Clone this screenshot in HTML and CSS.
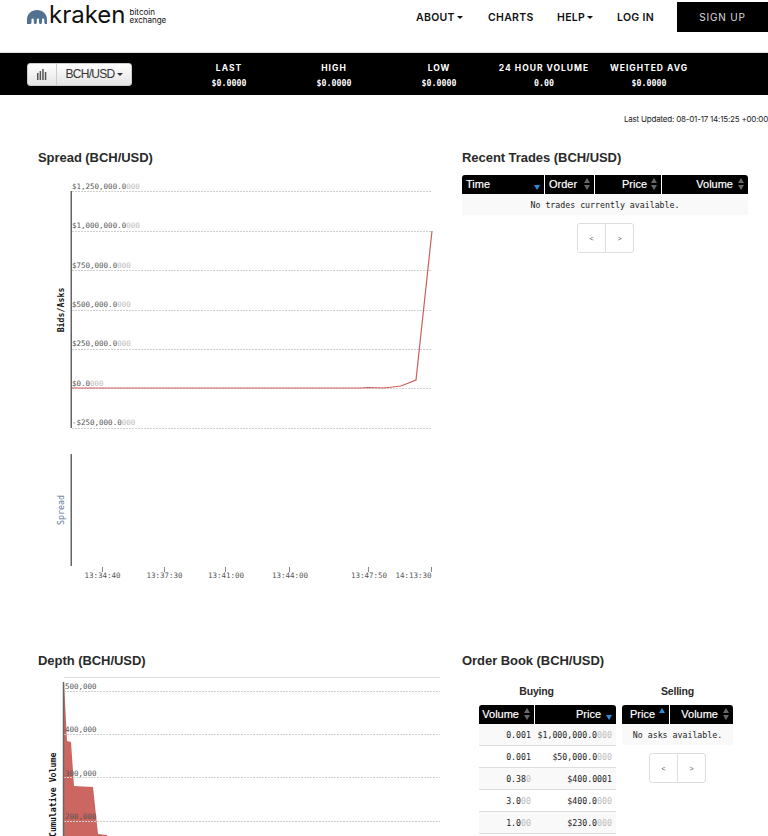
FILE: index.html
```html
<!DOCTYPE html>
<html lang="en">
<head>
<meta charset="utf-8">
<title>Kraken Bitcoin Exchange</title>
<link rel="stylesheet" href="styles.css">
</head>
<body>
<header class="topbar">
  <a class="logo">
    <svg class="logo-mark" viewBox="0 0 20 14" width="20" height="14" aria-hidden="true">
      <path fill="#52708f" d="M0 14V9.500C0 4 4.400 0 10 0s10 4 10 9.500V14h-1.200c-1 0-1.500-.8-1.500-1.800V9.600c0-.7-.5-1.200-1.100-1.200s-1.200.5-1.200 1.200v2.600c0 1-.7 1.800-1.500 1.800s-1.500-.8-1.500-1.800V9.600c0-.7-.5-1.200-1.100-1.200s-1.100.5-1.100 1.200v2.600c0 1-.7 1.800-1.500 1.800s-1.500-.8-1.500-1.800V9.600c0-.7-.5-1.200-1.200-1.200s-1.100.5-1.100 1.200v2.600c0 1-.5 1.800-1.500 1.800z"/>
    </svg>
    <span class="logo-word">kraken</span>
    <span class="logo-sub"><span>bitcoin</span><span>exchange</span></span>
  </a>
  <nav class="mainnav">
    <a class="nav-about">ABOUT<i class="caret"></i></a>
    <a class="nav-charts">CHARTS</a>
    <a class="nav-help">HELP<i class="caret"></i></a>
    <a class="nav-login">LOG IN</a>
  </nav>
  <a class="signup">SIGN UP</a>
</header>

<section class="ticker">
  <div class="pair-btn">
    <span class="pair-icon">
      <svg viewBox="0 0 10 12" width="10" height="12" aria-hidden="true"><path fill="#555" d="M0 5h1.500v7H0zM2.600 3h1.500v9H2.600zM5.200 1h1.500v11H5.200zM7.800 4h1.500v8H7.800z"/></svg>
    </span>
    <span class="pair-name">BCH/USD<i class="caret"></i></span>
  </div>
  <div class="stats">
    <div class="stat"><b>LAST</b><span>$0.0000</span></div>
    <div class="stat"><b>HIGH</b><span>$0.0000</span></div>
    <div class="stat"><b>LOW</b><span>$0.0000</span></div>
    <div class="stat"><b>24 HOUR VOLUME</b><span>0.00</span></div>
    <div class="stat"><b>WEIGHTED AVG</b><span>$0.0000</span></div>
  </div>
</section>

<p class="updated">Last Updated: 08-01-17 14:15:25 +00:00</p>

<main class="panels">
  <section class="panel panel-chart">
    <h2>Spread (BCH/USD)</h2>
    <svg class="chart chart-spread" viewBox="0 175 462 420" width="462" height="420">
      <g class="grid">
        <path d="M72 191.500H432M72 231.500H432M72 270.500H432M72 310.500H432M72 349.500H432M72 388.500H432M72 428.500H432"/>
      </g>
      <path class="axis" d="M71.250 191V428M71.250 454V566"/>
      <g class="ticks"><path d="M102.500 567v5M164.500 567v5M225.500 567v5M289.500 567v5M368.500 567v5M431.500 567v5"/></g>
      <polyline class="line" points="72,388 360,388 368,387.500 384,388 401,386 416,380 432,231"/>
      <g class="ylabel">
        <text x="72" y="189">$1,250,000.0<tspan>000</tspan></text>
        <text x="72" y="228">$1,000,000.0<tspan>000</tspan></text>
        <text x="72" y="268">$750,000.0<tspan>000</tspan></text>
        <text x="72" y="307">$500,000.0<tspan>000</tspan></text>
        <text x="72" y="346">$250,000.0<tspan>000</tspan></text>
        <text x="72" y="386">$0.0<tspan>000</tspan></text>
        <text x="72" y="425">-$250,000.0<tspan>000</tspan></text>
      </g>
      <g class="xlabel">
        <text x="102.500" y="578">13:34:40</text>
        <text x="164.500" y="578">13:37:30</text>
        <text x="226" y="578">13:41:00</text>
        <text x="290" y="578">13:44:00</text>
        <text x="369" y="578">13:47:50</text>
        <text x="413.500" y="578">14:13:30</text>
      </g>
      <text class="title-bids" transform="translate(64 310) rotate(-90)">Bids/Asks</text>
      <text class="title-spread" transform="translate(64 510) rotate(-90)">Spread</text>
    </svg>
  </section>

  <section class="panel panel-table">
    <h2>Recent Trades (BCH/USD)</h2>
    <table class="data trades">
      <thead>
        <tr>
          <th class="tl c-time">Time<i class="sort sort-down"></i></th>
          <th class="tl c-order">Order<i class="sort"></i></th>
          <th class="c-price">Price<i class="sort"></i></th>
          <th class="c-volume">Volume<i class="sort"></i></th>
        </tr>
      </thead>
      <tbody><tr><td colspan="4" class="empty">No trades currently available.</td></tr></tbody>
    </table>
    <div class="pager"><span>&lt;</span><span>&gt;</span></div>
  </section>

  <section class="panel panel-chart panel-depth">
    <h2>Depth (BCH/USD)</h2>
    <svg class="chart chart-depth" viewBox="0 672 462 170" width="462" height="170">
      <path class="topline" d="M64 677.500H440"/>
      <polygon class="area" points="64,682 67,741 71,742 74,786 93,787 98,834 107,835 109,842 64,842"/>
      <g class="grid"><path d="M64 691.500H440M64 734.500H440M64 777.500H440M64 821.500H440"/></g>
      <path class="axis" d="M63.500 682V842"/>
      <g class="ylabel">
        <text x="65" y="689">500,000</text>
        <text x="65" y="732">400,000</text>
        <text x="65" y="776">300,000</text>
        <text x="65" y="819">200,000</text>
      </g>
      <text class="title-bids" transform="translate(56 837) rotate(-90)">Cumulative Volume</text>
    </svg>
  </section>

  <section class="panel panel-table">
    <h2>Order Book (BCH/USD)</h2>
    <div class="book">
      <div class="book-side buying">
        <h3>Buying</h3>
        <table class="data">
          <thead>
            <tr>
              <th class="b-vol">Volume<i class="sort"></i></th>
              <th class="b-price">Price<i class="sort sort-down"></i></th>
            </tr>
          </thead>
          <tbody>
            <tr><td>0.001</td><td>$1,000,000.0<s>000</s></td></tr>
            <tr><td>0.001</td><td>$50,000.0<s>000</s></td></tr>
            <tr><td>0.38<s>0</s></td><td>$400.0001</td></tr>
            <tr><td>3.0<s>00</s></td><td>$400.0<s>000</s></td></tr>
            <tr><td>1.0<s>00</s></td><td>$230.0<s>000</s></td></tr>
          </tbody>
        </table>
      </div>
      <div class="book-side selling">
        <h3>Selling</h3>
        <table class="data">
          <thead>
            <tr>
              <th class="s-price">Price<i class="sort sort-up"></i></th>
              <th class="s-vol">Volume<i class="sort"></i></th>
            </tr>
          </thead>
          <tbody><tr><td colspan="2" class="empty">No asks available.</td></tr></tbody>
        </table>
        <div class="pager"><span>&lt;</span><span>&gt;</span></div>
      </div>
    </div>
  </section>
</main>
</body>
</html>
```
FILE: styles.css
```css
* { box-sizing: border-box; }
html, body { margin: 0; padding: 0; }
body {
  width: 768px;
  height: 836px;
  overflow: hidden;
  background: #fff;
  color: #222;
  font-family: "Liberation Sans", sans-serif;
}

.caret {
  display: inline-block;
  width: 0;
  height: 0;
  margin-left: 2px;
  vertical-align: middle;
  border-left: 3px solid transparent;
  border-right: 3px solid transparent;
  border-top: 3px solid currentColor;
}

/* header */
.topbar {
  position: relative;
  display: flex;
  height: 53px;
  border-bottom: 1px solid #ddd;
  padding-top: 2px;
  align-items: flex-start;
}
.logo {
  display: flex;
  align-items: flex-start;
  margin-left: 27px;
  width: 380px;
  color: #111;
}
.logo-mark { margin-top: 8px; flex: none; }
.logo-word {
  font-family: "Inter", sans-serif;
  font-size: 24px;
  font-weight: 400;
  line-height: 24px;
  margin-left: 2px;
  margin-top: 1px;
}
.logo-sub {
  display: flex;
  flex-direction: column;
  font-family: "Inter", sans-serif;
  font-size: 8px;
  line-height: 8px;
  margin-left: 4px;
  margin-top: 6px;
}
.mainnav {
  display: flex;
  flex: none;
  width: 280px;
  margin-left: -10px;
  height: 30px;
  align-items: center;
  font-family: "Inter", sans-serif;
  font-size: 10.500px;
  font-weight: 600;
  letter-spacing: 0.3px;
  color: #111;
}
.nav-about { margin-left: 19px; width: 72px; }
.nav-charts { width: 69px; }
.nav-help { width: 60px; }
.signup {
  width: 91px;
  height: 30px;
  flex: none;
  background: #000;
  color: #ddd;
  font-family: "Inter", sans-serif;
  font-size: 10px;
  letter-spacing: 0.8px;
  line-height: 30px;
  text-align: center;
}

/* ticker */
.ticker {
  display: flex;
  height: 42px;
  background: #000;
  align-items: center;
  padding-left: 27px;
}
.pair-btn {
  display: flex;
  width: 105px;
  height: 23px;
  border-radius: 3px;
  background: linear-gradient(#fff, #e4e4e4);
  border: 1px solid #ccc;
  color: #333;
  font-size: 12px;
  letter-spacing: -0.7px;
  line-height: 21px;
}
.pair-icon {
  width: 29px;
  display: flex;
  align-items: center;
  justify-content: center;
  border-right: 1px solid #ccc;
}
.pair-name { flex: 1; text-align: center; }
.stats { display: flex; margin-left: 44.500px; padding-top: 2px; }
.stat {
  width: 105px;
  display: flex;
  flex-direction: column;
  align-items: center;
  gap: 5px;
  color: #fff;
  white-space: nowrap;
}
.stat b {
  font-family: "Inter", sans-serif;
  font-size: 8.500px;
  line-height: 10px;
  font-weight: 700;
  letter-spacing: 1px;
}
.stat span {
  font-family: "DejaVu Sans Mono", monospace;
  font-size: 8.250px;
  line-height: 10px;
  font-weight: 700;
}

.updated {
  margin: 0;
  height: 50px;
  padding-top: 19px;
  text-align: right;
  font-family: "Inter", sans-serif;
  font-size: 8px;
  letter-spacing: -0.2px;
  line-height: 10px;
  white-space: nowrap;
  color: #222;
}

/* panels */
.panels {
  display: grid;
  grid-template-columns: 462px 306px;
  grid-template-rows: 503px auto;
}
h2 {
  margin: 0;
  font-size: 13px;
  line-height: 26px;
  height: 30px;
  font-weight: 700;
  letter-spacing: -0.05px;
  color: #2a2a2a;
}
.panel-chart h2 { padding-left: 38px; }
.panel-depth h2 { height: 24px; }
.chart { display: block; overflow: hidden; }
.grid path { fill: none; stroke: #cfcfcf; stroke-width: 1; stroke-dasharray: 2 1; }
.axis { fill: none; stroke: #666; stroke-width: 1.500; }
.ticks path { stroke: #888; stroke-width: 1; fill: none; }
.line { fill: none; stroke: #c9605c; stroke-width: 1.200; }
.area { fill: #cc6660; }
.topline { stroke: #ddd; stroke-width: 1; fill: none; }
.ylabel text, .xlabel text {
  font-family: "DejaVu Sans Mono", monospace;
  font-size: 7.500px;
  fill: #555;
}
.xlabel text { text-anchor: middle; }
.ylabel tspan { fill: #bbb; }
.title-bids, .title-spread {
  font-family: "DejaVu Sans Mono", monospace;
  font-size: 8.250px;
  text-anchor: middle;
}
.title-bids { fill: #111; font-weight: 700; }
.chart-depth .title-bids { text-anchor: start; }
.title-spread { fill: #5b7a99; }

/* tables */
.data {
  border-collapse: separate;
  border-spacing: 0;
  table-layout: fixed;
  width: 100%;
}
.trades { width: 286px; }
.data th {
  position: relative;
  height: 19px;
  padding: 0 15px 0 0;
  background: #000;
  color: #fff;
  font-size: 11px;
  line-height: 19px;
  font-weight: 400;
  text-align: right;
  text-shadow: 0 0 1px rgba(255, 255, 255, 0.5);
  border-right: 1px solid #fff;
  white-space: nowrap;
}
.data th:last-child { border-right: 0; border-top-right-radius: 3px; }
.data th:first-child { border-top-left-radius: 3px; }
.data th.tl { text-align: left; padding-left: 4px; }
.c-time { width: 83px; }
.c-order { width: 50px; }
.c-price { width: 67px; }
.data th.c-price { padding-right: 14px; }
.b-vol { width: 56px; }
.s-price { width: 48px; }
.data th.s-price { padding-right: 14px; }
.sort {
  position: absolute;
  right: 3px;
  top: 3px;
  width: 7px;
  height: 12px;
}
.sort::before, .sort::after {
  content: "";
  position: absolute;
  left: 0;
  border-left: 3.500px solid transparent;
  border-right: 3.500px solid transparent;
}
.sort::before { top: 0; border-bottom: 5.500px solid #666; }
.sort::after { bottom: 0; border-top: 5.500px solid #666; }
.sort-down::before { display: none; }
.sort-down::after { border-top-color: #2a8fdc; }
.sort-up::after { display: none; }
.sort-up::before { border-bottom-color: #2a8fdc; }
.data td {
  height: 22px;
  padding: 0 4px 0 0;
  text-align: right;
  font-family: "DejaVu Sans Mono", monospace;
  font-size: 8.250px;
  color: #222;
  border-bottom: 1px solid #ddd;
  white-space: nowrap;
}
.data tbody tr:nth-child(odd) td { background: #f9f9f9; }
.data td.empty {
  text-align: center;
  padding: 0;
  height: 21px;
  border-bottom: 0;
}
.data s { text-decoration: none; color: #bbb; }
.pager {
  display: flex;
  width: 57px;
  height: 30px;
  margin: 8px auto 0;
  border: 1px solid #ddd;
  border-radius: 3px;
  font-family: "Liberation Sans", sans-serif;
  font-size: 7px;
  color: #555;
}
.trades + .pager { margin-left: 115px; }
.pager span {
  flex: 1;
  display: flex;
  align-items: center;
  justify-content: center;
}
.pager span:first-child { border-right: 1px solid #ddd; }

/* order book */
.book {
  display: flex;
  gap: 6px;
  margin-left: 17px;
}
.book-side h3 {
  margin: 0;
  height: 27px;
  font-size: 10.500px;
  line-height: 26px;
  font-weight: 700;
  text-align: center;
  color: #2a2a2a;
  letter-spacing: -0.2px;
}
.buying h3 { padding-right: 22px; }
.buying { width: 137px; }
.selling { width: 111px; }
```
